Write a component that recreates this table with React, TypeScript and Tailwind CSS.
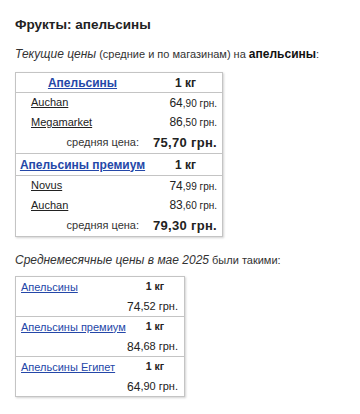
import React from "react";

type Shop = { name: string; whole: string; cents: string };
type Group = { title: string; shops: Shop[]; avg: string };

const groups: Group[] = [
  {
    title: "Апельсины",
    shops: [
      { name: "Auchan", whole: "64", cents: ",90" },
      { name: "Megamarket", whole: "86", cents: ",50" },
    ],
    avg: "75,70 грн.",
  },
  {
    title: "Апельсины премиум",
    shops: [
      { name: "Novus", whole: "74", cents: ",99" },
      { name: "Auchan", whole: "83", cents: ",60" },
    ],
    avg: "79,30 грн.",
  },
];

const monthly = [
  { name: "Апельсины", whole: "74", cents: ",52" },
  { name: "Апельсины премиум", whole: "84", cents: ",68" },
  { name: "Апельсины Египет", whole: "64", cents: ",90" },
];

const font = { fontFamily: '"Liberation Sans", Arial, sans-serif' };
const rowHeights = ["h-[19px]", "h-[20px]"];

export default function App() {
  return (
    <div className="w-[360px] h-[414px] bg-white px-[15px] pt-[16px] text-[#222]" style={font}>
      <h1 className="text-[13.5px] leading-[18px] font-bold">Фрукты: апельсины</h1>

      <p className="mt-[12px] text-[11px] leading-[16px] text-[#333]">
        <i className="text-[12px]">Текущие цены</i> (средние и по магазинам) на{" "}
        <b className="text-[12px] text-[#111]">апельсины</b>:
      </p>

      <div className="mt-[10px] w-[208px] border border-[#c4c4c4] shadow-[1px_1px_2px_rgba(0,0,0,0.18)]">
        {groups.map((g, gi) => (
          <div key={g.title} className={gi > 0 ? "border-t border-[#c4c4c4]" : ""}>
            <div
              className={`flex items-center border-b border-[#c4c4c4] text-[12px] font-bold ${
                gi > 0 ? "h-[22px]" : "h-[20px]"
              }`}
            >
              <span className="flex-1 text-center">
                <a className="text-[#2447a8] underline">{g.title}</a>
              </span>
              <span className="w-[73px] text-center">1 кг</span>
            </div>
            {g.shops.map((s, si) => (
              <div key={s.name} className={`flex items-center pl-[15px] pr-[5px] ${rowHeights[si]}`}>
                <a className="flex-1 text-[11px] text-[#222] underline">{s.name}</a>
                <span className="text-[12px]">
                  {s.whole}
                  <span className="text-[10px]">{s.cents} грн.</span>
                </span>
              </div>
            ))}
            <div className="flex h-[21px] items-center justify-end pr-[5px]">
              <span className="text-[11px] text-[#333]">средняя цена:</span>
              <span className="ml-[14px] text-[13px] font-bold tracking-[0.3px]">{g.avg}</span>
            </div>
          </div>
        ))}
      </div>

      <p className="mt-[15px] text-[11px] leading-[16px] text-[#333]">
        <i className="text-[12px]">Среднемесячные цены в мае 2025</i> были такими:
      </p>

      <div className="mt-[8px] w-[170px] border border-[#c4c4c4] shadow-[1px_1px_2px_rgba(0,0,0,0.18)]">
        {monthly.map((m, i) => (
          <div key={m.name} className={i > 0 ? "border-t border-[#c4c4c4]" : ""}>
            <div className="flex h-[20px] items-center pl-[5px] pr-[7px]">
              <a className="flex-1 text-[11px] text-[#2447a8] underline">{m.name}</a>
              <span className="w-[44px] text-center text-[10.5px] font-bold">1 кг</span>
            </div>
            <div className="flex h-[19px] items-center justify-end pr-[6px] text-[12px]">
              {m.whole}
              <span className="text-[11px]">{m.cents} грн.</span>
            </div>
          </div>
        ))}
      </div>
    </div>
  );
}
